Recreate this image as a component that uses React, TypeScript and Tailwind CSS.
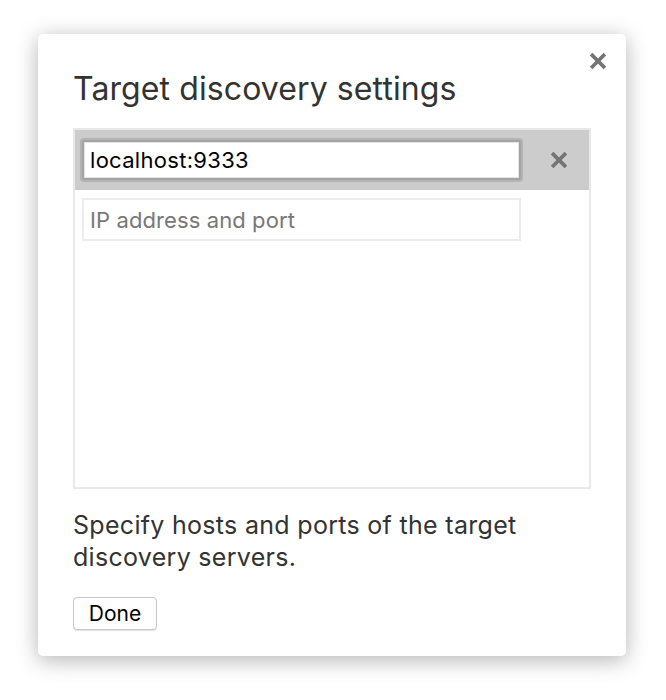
function CloseGlyph({ className }: { className?: string }) {
  return (
    <svg viewBox="0 0 16 16" className={className} fill="none" stroke="currentColor" strokeWidth="3.2" strokeLinecap="square">
      <path d="M3 3l10 10M13 3L3 13" />
    </svg>
  );
}

export default function App() {
  return (
    <div className="min-h-[700px] bg-white pl-[38px] pt-[34px] font-['Inter','Liberation_Sans',sans-serif]">
      <div className="relative flex h-[622px] w-[588px] flex-col rounded-[5px] bg-white px-[35px] shadow-[0_4px_22px_rgba(0,0,0,0.3)]">
        <button className="absolute right-[19px] top-[18px] text-[#747474]" aria-label="Close">
          <CloseGlyph className="h-[18px] w-[18px]" />
        </button>

        <h1 className="mt-[35px] text-[32px] leading-[40px] tracking-[0.1px] text-[#333]">Target discovery settings</h1>

        <div className="mt-[19px] h-[361px] border-2 border-[#e8e8e8]">
          <div className="flex h-[60px] items-center bg-[#cccccc] pl-[7px]">
            <input
              readOnly
              value="localhost:9333"
              className="h-[40px] w-[439px] rounded-[2px] border-2 border-[#a4a4a4] bg-white px-[6px] text-[22px] tracking-[0.3px] text-black shadow-[0_0_0_2px_#b4b4b4,inset_0_0_0_1px_#e4e4e4] outline-none"
            />
            <div className="ml-[29px] text-[#747474]">
              <CloseGlyph className="h-[18px] w-[18px]" />
            </div>
          </div>
          <div className="pl-[7px] pt-[8px]">
            <input
              placeholder="IP address and port"
              className="h-[43px] w-[439px] border-2 border-[#ececec] bg-white px-[6px] text-[22px] tracking-[0.1px] text-black outline-none placeholder:text-[#777]"
            />
          </div>
        </div>

        <p className="mt-[20px] text-[25px] leading-[32px] tracking-[0.3px] text-[#333]">
          Specify hosts and ports of the target discovery servers.
        </p>

        <div className="mt-[24px]">
          <button className="h-[33px] w-[84px] rounded-[4px] border border-[#c8c8c8] bg-white text-[21px] text-black shadow-[0_1px_1px_rgba(0,0,0,0.12)]">
            Done
          </button>
        </div>
      </div>
    </div>
  );
}
